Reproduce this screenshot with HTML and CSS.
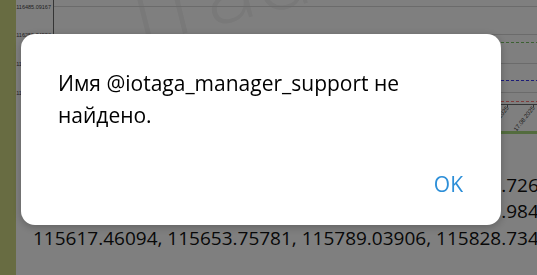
FILE: index.html
```html
<!DOCTYPE html>
<html lang="ru">
<head>
<meta charset="utf-8">
<title>Alert</title>
<link rel="stylesheet" href="styles.css">
</head>
<body>
<div class="page">
  <div class="wallpaper"></div>
  <div class="bubble">
    <svg class="chart" width="540" height="145" viewBox="0 0 540 145">
      <text x="110" y="48" class="watermark" transform="rotate(-14 110 48)">Trade</text>
      <g class="grid">
        <line x1="37" y1="6.5" x2="540" y2="6.5"/>
        <line x1="37" y1="34.5" x2="540" y2="34.5"/>
        <line x1="37" y1="63.5" x2="540" y2="63.5"/>
        <line x1="37" y1="92.5" x2="540" y2="92.5"/>
      </g>
      <g class="ylabels">
        <text x="35" y="8.5">116485.09167</text>
        <text x="35" y="36.5">116255.84583</text>
        <text x="35" y="65.5">116026.60000</text>
        <text x="35" y="94.5">115797.35417</text>
      </g>
      <line class="axis" x1="37.5" y1="0" x2="37.5" y2="104.5"/>
      <line class="axis" x1="37" y1="104.5" x2="540" y2="104.5"/>
      <line class="dash green" x1="40" y1="42.5" x2="540" y2="42.5"/>
      <line class="dash blue" x1="40" y1="80.5" x2="540" y2="80.5"/>
      <line class="dash red" x1="40" y1="101.5" x2="540" y2="101.5"/>
      <line class="axis" x1="491.5" y1="104" x2="491.5" y2="107"/>
      <line class="axis" x1="517.5" y1="104" x2="517.5" y2="107"/>
      <text class="xlabel" x="0" y="0" transform="translate(493 108) rotate(-52)">14.08.2025</text>
      <text class="xlabel" x="0" y="0" transform="translate(519 108) rotate(-52)">17.08.2025</text>
      <rect class="volume" x="40" y="131" width="500" height="3"/>
    </svg>
    <div class="values">
      <div class="row">115439.21875, 115480.55469, 115559.91406, 115598.72656, 115634.10156</div>
      <div class="row">115512.60156, 115551.33594, 115586.81250, 115610.98438, 115652.43750</div>
      <div class="row">115617.46094, 115653.75781, 115789.03906, 115828.73438, 115860.21875</div>
    </div>
  </div>
</div>

<div class="overlay">
  <div class="dialog" role="alertdialog">
    <p class="message">Имя @iotaga_manager_support не найдено.</p>
    <div class="actions">
      <button class="ok" type="button">OK</button>
    </div>
  </div>
</div>
</body>
</html>
```

FILE: styles.css
```css
html, body {
  margin: 0;
  padding: 0;
  width: 537px;
  height: 275px;
  overflow: hidden;
}

body {
  font-family: "Open Sans", "Liberation Sans", sans-serif;
  background: #d0d884;
}

.page {
  display: flex;
  width: 537px;
  height: 275px;
}

.wallpaper {
  flex: 0 0 16px;
  background: #d0d884;
}

.bubble {
  flex: 0 0 560px;
  background: #ffffff;
  display: flex;
  flex-direction: column;
}

.chart {
  display: block;
}

.watermark {
  font-family: "Open Sans", "Liberation Sans", sans-serif;
  font-size: 96px;
  font-weight: 300;
  fill: #f2f2f2;
}

.grid line {
  stroke: #d6d6d6;
  stroke-width: 1;
}

.ylabels text {
  font-family: "Liberation Sans", sans-serif;
  font-size: 5.5px;
  fill: #444;
  text-anchor: end;
}

.axis {
  stroke: #6a6a6a;
  stroke-width: 1;
}

.dash {
  stroke-width: 1.2;
  stroke-dasharray: 3 2;
}

.green { stroke: #79c264; }
.blue { stroke: #3a3aee; }
.red { stroke: #ff7878; }

.xlabel {
  font-family: "Liberation Sans", sans-serif;
  font-size: 6px;
  fill: #333;
  text-anchor: end;
}

.volume {
  fill: #a6d97c;
}

.values {
  padding-left: 17px;
  padding-top: 26.5px;
  font-size: 19px;
  line-height: 26.5px;
  color: #111;
}

.row {
  white-space: nowrap;
}

.overlay {
  position: fixed;
  inset: 0;
  background: rgba(0, 0, 0, 0.5);
  padding: 34px 0 0 21px;
  box-sizing: border-box;
}

.dialog {
  width: 480px;
  height: 191px;
  box-sizing: border-box;
  background: #ffffff;
  border-radius: 14px;
  box-shadow: 0 2px 8px rgba(0, 0, 0, 0.25);
  padding: 32.5px 38px 0 37px;
  display: flex;
  flex-direction: column;
}

.message {
  margin: 0;
  font-size: 21px;
  line-height: 32px;
  color: #000;
}

.actions {
  margin-top: auto;
  margin-bottom: 29px;
  display: flex;
  justify-content: flex-end;
}

.ok {
  font-family: "Open Sans", "Liberation Sans", sans-serif;
  font-size: 21px;
  line-height: 24px;
  color: #2d8fd8;
  background: none;
  border: 0;
  padding: 0;
  cursor: pointer;
}
```
